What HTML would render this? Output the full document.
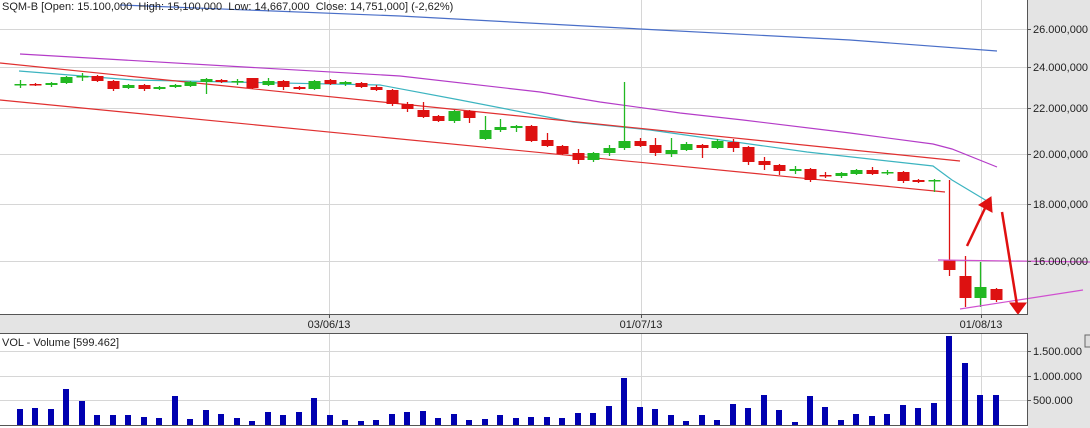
<!DOCTYPE html>
<html><head><meta charset="utf-8"><style>
html,body{margin:0;padding:0;background:#fff;width:1090px;height:428px;overflow:hidden}
svg{display:block;font-family:"Liberation Sans",Arial,sans-serif}
</style></head><body>
<svg id="s" width="1090" height="428" xmlns="http://www.w3.org/2000/svg">
<rect x="0" y="0" width="1090" height="428" fill="#fff"/>
<rect x="1028" y="0" width="62" height="428" fill="#e4e4e4"/>
<rect x="0" y="315" width="1028" height="18" fill="#e4e4e4"/>
<g stroke="#d6d6d6" stroke-width="1">
<line x1="0" y1="29.5" x2="1027" y2="29.5"/><line x1="0" y1="67.5" x2="1027" y2="67.5"/>
<line x1="0" y1="108.5" x2="1027" y2="108.5"/><line x1="0" y1="154.5" x2="1027" y2="154.5"/>
<line x1="0" y1="204.5" x2="1027" y2="204.5"/><line x1="0" y1="261.5" x2="1027" y2="261.5"/>
<line x1="329.5" y1="0" x2="329.5" y2="314"/><line x1="641.5" y1="0" x2="641.5" y2="314"/><line x1="981.5" y1="0" x2="981.5" y2="314"/>
<line x1="0" y1="351.5" x2="1027" y2="351.5"/><line x1="0" y1="376.5" x2="1027" y2="376.5"/><line x1="0" y1="400.5" x2="1027" y2="400.5"/>
<line x1="329.5" y1="334" x2="329.5" y2="425"/><line x1="641.5" y1="334" x2="641.5" y2="425"/><line x1="981.5" y1="334" x2="981.5" y2="425"/>
</g>
<g fill="none" stroke-width="1.2">
<polyline stroke="#4a6fc8" points="120,5 400,16 640,29 850,40 997,51"/>
<polyline stroke="#b43cc8" points="20,54 400,76 540,92 600,102 680,113 743,120 850,133 933,144 952,149 997,167"/>
<polyline stroke="#3cb4c0" points="19,71 133,80 380,85 460,100 573,122 650,130 807,152 933,166 952,180 987,201"/>
<line stroke="#e03030" x1="0" y1="63" x2="960" y2="161"/>
<line stroke="#e03030" x1="0" y1="100" x2="945" y2="192"/>
</g>
<g id="c"></g>
<g id="v" fill="#0000b0"></g>
<g fill="none" stroke-width="1.2" stroke="#d050d0">
<line x1="938" y1="260" x2="1090" y2="262"/>
<line x1="960" y1="309" x2="1083" y2="290"/>
</g>
<g stroke="#e01010" stroke-width="2.5" fill="#e01010">
<line x1="967" y1="246" x2="987" y2="204"/>
<polygon points="991,197 979,205 992,212" stroke-width="1"/>
<line x1="1002" y1="212" x2="1017" y2="305"/>
<polygon points="1018,314 1010,303 1026,303" stroke-width="1"/>
</g>
<g stroke="#555" stroke-width="1">
<line x1="1027.5" y1="0" x2="1027.5" y2="315"/>
<line x1="0" y1="314.5" x2="1028" y2="314.5"/>
<line x1="0" y1="333.5" x2="1028" y2="333.5"/>
<line x1="1027.5" y1="333" x2="1027.5" y2="426"/>
<line x1="0" y1="425.5" x2="1028" y2="425.5"/>
<line x1="1027" y1="29.5" x2="1031" y2="29.5"/><line x1="1027" y1="67.5" x2="1031" y2="67.5"/>
<line x1="1027" y1="108.5" x2="1031" y2="108.5"/><line x1="1027" y1="154.5" x2="1031" y2="154.5"/>
<line x1="1027" y1="204.5" x2="1031" y2="204.5"/><line x1="1027" y1="261.5" x2="1031" y2="261.5"/>
<line x1="1027" y1="351.5" x2="1031" y2="351.5"/><line x1="1027" y1="376.5" x2="1031" y2="376.5"/><line x1="1027" y1="400.5" x2="1031" y2="400.5"/>
<line x1="329.5" y1="314" x2="329.5" y2="318"/><line x1="641.5" y1="314" x2="641.5" y2="318"/><line x1="981.5" y1="314" x2="981.5" y2="318"/>
</g>
<rect x="1085" y="335" width="6" height="12" fill="#ddd" stroke="#666"/>
<g font-size="11" fill="#222">
<text x="2" y="10">SQM-B [Open: 15.100,000&#160; High: 15,100,000&#160; Low: 14,667,000&#160; Close: 14,751,000] (-2,62%)</text>
<text x="1033" y="33">26.000,000</text><text x="1033" y="71">24.000,000</text>
<text x="1033" y="112">22.000,000</text><text x="1033" y="158">20.000,000</text>
<text x="1033" y="208">18.000,000</text><text x="1033" y="265">16.000,000</text>
<text x="329" y="328" text-anchor="middle">03/06/13</text>
<text x="641" y="328" text-anchor="middle">01/07/13</text>
<text x="981" y="328" text-anchor="middle">01/08/13</text>
<text x="2" y="346">VOL - Volume [599.462]</text>
<text x="1033" y="355">1.500.000</text><text x="1033" y="380">1.000.000</text><text x="1033" y="404">500.000</text>
</g>
</svg>
<script>
var C=[["g",84,85,80,88],["r",84,85,83,86],["g",83,85,82,87],["g",77,83,76,84],["g",76,77,73,81],["r",76,81,75,82],["r",81,89,80,91],["g",85,88,84,89],["r",85,89,84,91],["g",87,89,86,90],["g",85,87,84,88],["g",82,86,81,87],["g",79,82,78,94],["r",80,82,79,83],["g",81,82,79,85],["r",78,88,78,89],["g",81,85,78,86],["r",81,87,80,90],["r",87,89,86,90],["g",81,89,80,90],["r",80,84,79,85],["g",82,84,81,86],["r",83,87,82,88],["r",87,90,85,91],["r",90,104,89,106],["r",104,109,102,112],["r",110,117,102,118],["r",116,121,115,122],["g",111,121,110,123],["r",111,118,110,123],["g",130,139,116,140],["g",127,130,119,132],["g",126,128,125,132],["r",126,141,125,142],["r",140,146,133,147],["r",146,154,145,155],["r",153,160,149,164],["g",153,160,152,162],["g",148,153,145,156],["g",141,148,82,150],["r",141,146,138,147],["r",145,153,138,156],["g",150,154,138,157],["g",144,150,142,151],["r",145,148,144,158],["g",141,148,139,149],["r",142,148,139,152],["r",147,162,146,165],["r",161,165,157,170],["r",165,171,164,175],["g",169,171,166,174],["r",169,180,168,182],["r",175,176,172,178],["g",173,176,172,178],["g",170,174,169,175],["r",170,174,167,175],["g",172,173,170,175],["r",172,181,171,183],["r",180,182,179,183],["g",180,181,179,192],["r",260,270,180,276],["r",276,298,256,307],["g",287,298,262,307],["r",289,300,288,302]];
var V=[409,408,409,389,401,415,415,415,417,418,396,419,410,414,418,421,412,415,412,398,415,420,421,420,414,412,411,418,414,420,419,415,418,417,417,418,413,413,406,378,407,409,415,421,415,420,404,408,395,410,422,396,407,420,414,416,414,405,408,403,336,363,395,395];
var ns="http://www.w3.org/2000/svg",cg=document.getElementById("c"),vg=document.getElementById("v");
function el(t,a,p){var e=document.createElementNS(ns,t);for(var k in a)e.setAttribute(k,a[k]);p.appendChild(e);}
for(var i=0;i<C.length;i++){var x=Math.round(20+i*15.49),d=C[i],col=d[0]=="r"?"#dd1111":"#22b822";
el("line",{x1:x+0.5,y1:d[3],x2:x+0.5,y2:d[4],stroke:col,"stroke-width":1.3},cg);
var h=Math.max(d[2]-d[1],1.5);el("rect",{x:x-5.5,y:d[1],width:12,height:h,fill:col},cg);}
for(var i=0;i<V.length;i++){var x=Math.round(20+i*15.49);el("rect",{x:x-3,y:V[i],width:6,height:425-V[i]},vg);}
</script>
</body></html>
